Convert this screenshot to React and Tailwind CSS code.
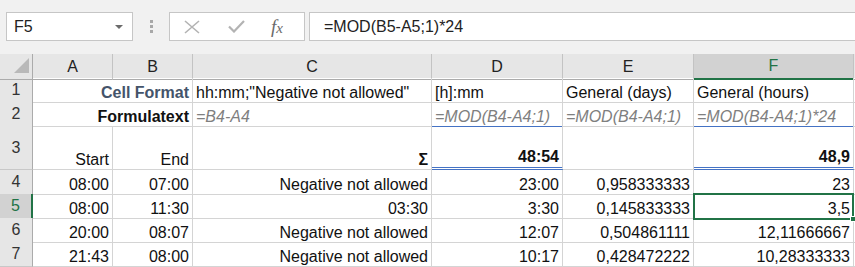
import React from 'react';

const COLS = 'grid grid-cols-[33px_80px_80px_239px_131px_131px_160px_1fr]';
const font = { fontFamily: '"Liberation Sans", Arial, sans-serif' };

function Cell({ children, align = 'right', className = '', span = '' }) {
  const justify = align === 'left' ? 'justify-start' : 'justify-end';
  return (
    <div
      className={`flex items-end ${justify} ${span} overflow-visible whitespace-nowrap border-b border-r border-[#d4d4d4] px-[3px] text-[16px] leading-[18px] text-[#111] ${className}`}
    >
      {children}
    </div>
  );
}

function RowHead({ n, selected = false }) {
  return (
    <div
      className={`flex items-center justify-center border-b text-[16px] ${
        selected
          ? 'border-r-2 border-b-[#bdbdbd] border-r-[#217346] bg-[#d2d2d2] text-[#217346]'
          : 'border-r border-b-[#c8c8c8] border-r-[#ababab] bg-[#e6e6e6] text-[#333]'
      }`}
    >
      {n}
    </div>
  );
}

function Formula({ children }) {
  return <span className="italic text-[#7f7f7f]">{children}</span>;
}

const data = [
  ['08:00', '07:00', 'Negative not allowed', '23:00', '0,958333333', '23'],
  ['08:00', '11:30', '03:30', '3:30', '0,145833333', '3,5'],
  ['20:00', '08:07', 'Negative not allowed', '12:07', '0,504861111', '12,11666667'],
  ['21:43', '08:00', 'Negative not allowed', '10:17', '0,428472222', '10,28333333'],
];

function FormulaBar() {
  return (
    <div className="flex h-[54px] items-start bg-[#f1f1f1] pt-[12px]">
      <div className="ml-[6px] flex h-[29px] w-[127px] items-center justify-between border border-[#c6c6c6] bg-white pl-[7px] pr-[9px] text-[16px] text-[#222]">
        <span>F5</span>
        <span className="h-0 w-0 border-l-[4px] border-r-[4px] border-t-[4px] border-l-transparent border-r-transparent border-t-[#6b6b6b]" />
      </div>
      <div className="ml-[17px] mt-[8px] flex flex-col gap-[2px]">
        <span className="h-[3px] w-[3px] bg-[#a8a8a8]" />
        <span className="h-[3px] w-[3px] bg-[#a8a8a8]" />
        <span className="h-[3px] w-[3px] bg-[#a8a8a8]" />
      </div>
      <div className="ml-[16px] flex h-[29px] w-[136px] items-center border border-[#c6c6c6] bg-white">
        <svg className="ml-[14px]" width="16" height="14" viewBox="0 0 16 14">
          <path d="M1 1 L15 13 M15 1 L1 13" stroke="#b3b3b3" strokeWidth="1.6" fill="none" />
        </svg>
        <svg className="ml-[28px]" width="17" height="13" viewBox="0 0 17 13">
          <path d="M1 6.5 L6 11.5 L16 1" stroke="#b3b3b3" strokeWidth="2.2" fill="none" />
        </svg>
        <span
          className="ml-[26px] text-[19px] italic leading-none text-[#6a6a6a]"
          style={{ fontFamily: '"Liberation Serif", "Times New Roman", serif' }}
        >
          f<span className="text-[15px]">x</span>
        </span>
      </div>
      <div className="ml-[4px] flex h-[29px] flex-1 items-center border border-r-0 border-[#c6c6c6] bg-white pl-[14px] text-[16px] text-[#222]">
        =MOD(B5-A5;1)*24
      </div>
    </div>
  );
}

function ColHeaders() {
  const letters = ['A', 'B', 'C', 'D', 'E'];
  return (
    <div className={`${COLS} h-[24px] bg-[#e6e6e6]`}>
      <div className="relative border-b border-r border-[#ababab]">
        <span className="absolute left-[14px] top-[4px] h-0 w-0 border-b-[15px] border-l-[15px] border-b-[#b9b9b9] border-l-transparent" />
      </div>
      {letters.map((l) => (
        <div
          key={l}
          className="flex items-center justify-center border-b border-r border-b-[#ababab] border-r-[#c3c3c3] text-[16px] text-[#222]"
        >
          {l}
        </div>
      ))}
      <div className="flex items-center justify-center border-b-2 border-r border-b-[#217346] border-r-[#c3c3c3] bg-[#d2d2d2] text-[16px] text-[#217346]">
        F
      </div>
      <div className="border-b border-[#ababab]" />
    </div>
  );
}

export default function App() {
  return (
    <div className="h-[267px] w-[855px] overflow-hidden bg-white" style={font}>
      <FormulaBar />
      <ColHeaders />

      <div className={`${COLS} h-[24px]`}>
        <RowHead n={1} />
        <Cell span="col-span-2" className="font-bold text-[#44546a]">
          Cell Format
        </Cell>
        <Cell align="left">hh:mm;"Negative not allowed"</Cell>
        <Cell align="left">[h]:mm</Cell>
        <Cell align="left">General (days)</Cell>
        <Cell align="left">General (hours)</Cell>
        <div className="border-b border-[#d4d4d4]" />
      </div>

      <div className={`${COLS} h-[24px]`}>
        <RowHead n={2} />
        <Cell span="col-span-2" className="font-bold text-[#4f5e73]">
          Formulatext
        </Cell>
        <Cell align="left">
          <Formula>=B4-A4</Formula>
        </Cell>
        <Cell align="left" className="border-b-[#4472c4]">
          <Formula>=MOD(B4-A4;1)</Formula>
        </Cell>
        <Cell align="left">
          <Formula>=MOD(B4-A4;1)</Formula>
        </Cell>
        <Cell align="left" className="border-b-[#4472c4]">
          <Formula>=MOD(B4-A4;1)*24</Formula>
        </Cell>
        <div className="border-b border-[#d4d4d4]" />
      </div>

      <div className={`${COLS} h-[44px]`}>
        <RowHead n={3} />
        <Cell>Start</Cell>
        <Cell>End</Cell>
        <Cell className="font-bold">Σ</Cell>
        <Cell className="border-b-[3px] border-double border-b-[#4472c4] pb-[1px] font-bold">48:54</Cell>
        <Cell />
        <Cell className="border-b-[3px] border-double border-b-[#4472c4] pb-[1px] font-bold">48,9</Cell>
        <div className="border-b border-[#d4d4d4]" />
      </div>

      {data.map((row, i) => (
        <div key={i} className={`${COLS} h-[24px]`}>
          <RowHead n={i + 4} selected={i === 1} />
          {row.map((v, j) =>
            j === 5 && i === 1 ? (
              <Cell key={j} className="relative">
                {v}
                <span className="pointer-events-none absolute -left-[1px] -top-[1px] bottom-[-2px] right-[-1px] border-2 border-[#217346]" />
                <span className="absolute -bottom-[4px] right-[-3px] h-[6px] w-[6px] border border-white bg-[#217346]" />
              </Cell>
            ) : (
              <Cell key={j}>{v}</Cell>
            )
          )}
          <div className="border-b border-[#d4d4d4]" />
        </div>
      ))}
    </div>
  );
}
